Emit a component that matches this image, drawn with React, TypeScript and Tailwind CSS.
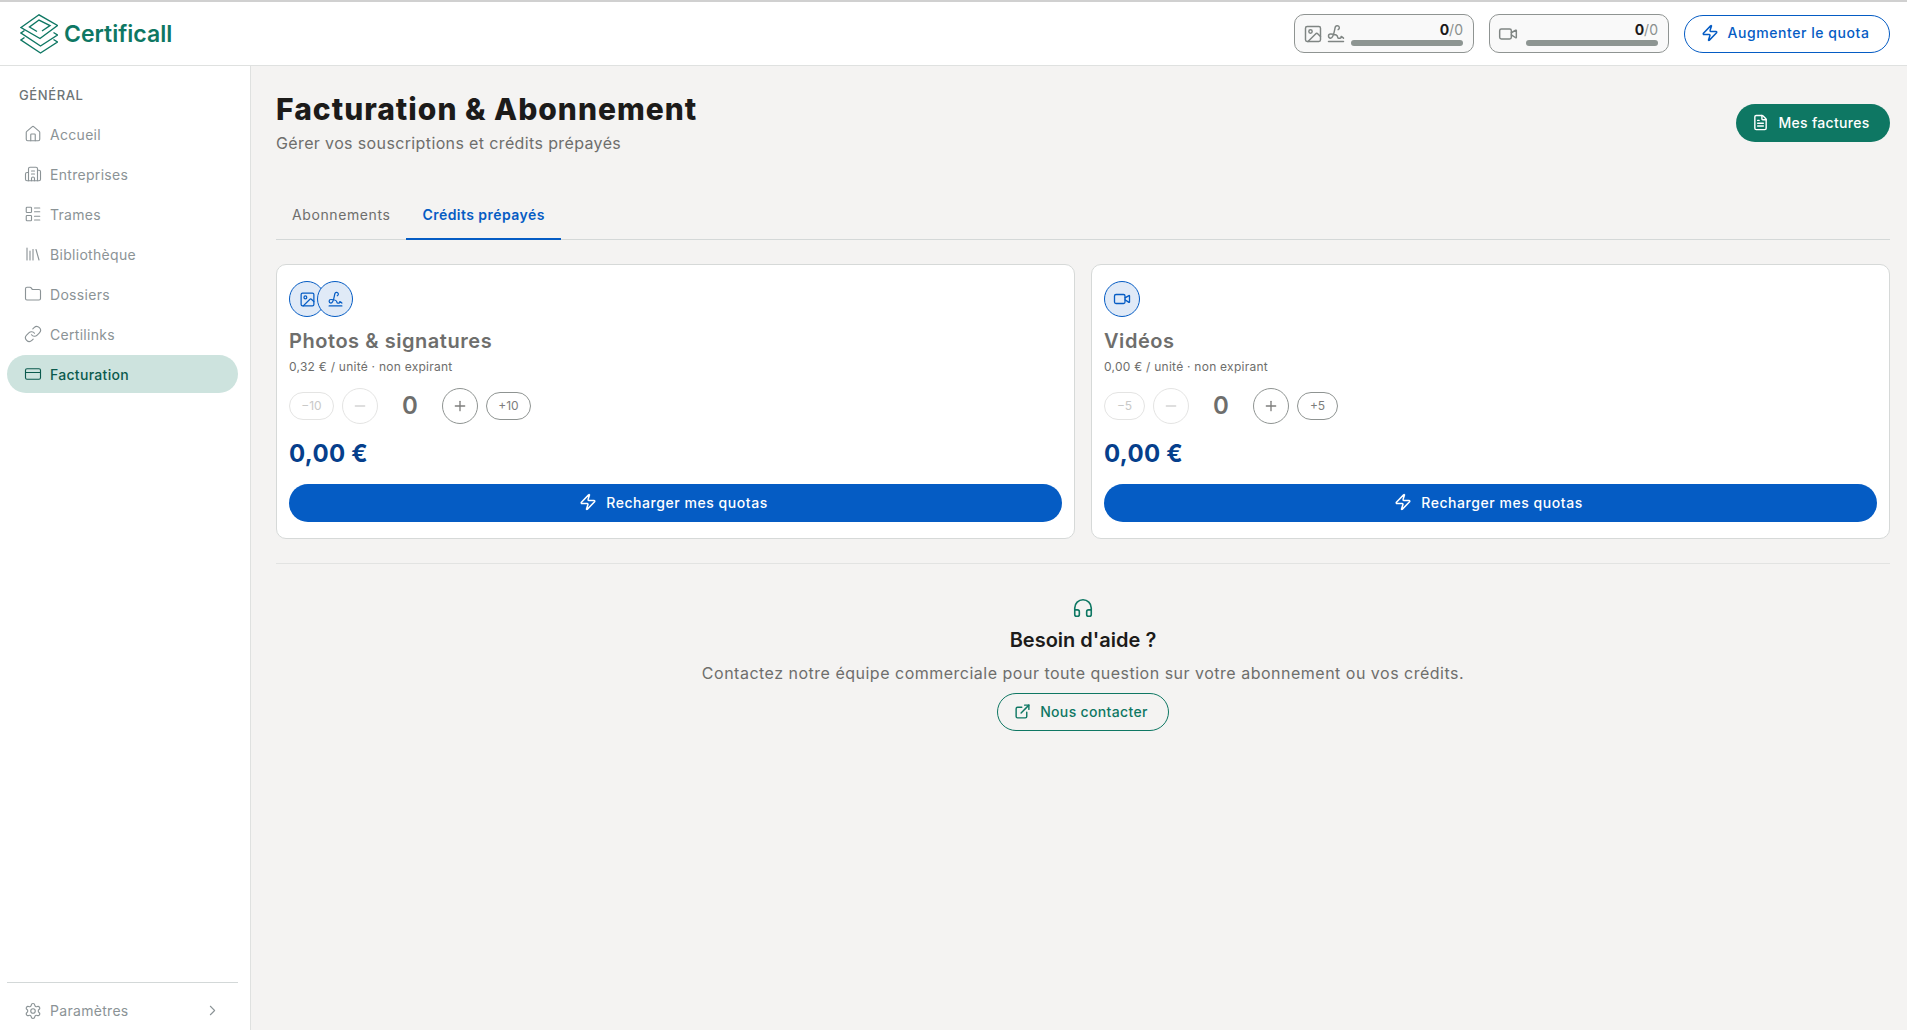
import type { ReactNode } from 'react';
import {
  Building2,
  ChevronRight,
  CreditCard,
  ExternalLink,
  FileText,
  Folder,
  Headphones,
  House,
  Image as ImageIcon,
  LayoutList,
  Library,
  Link as LinkIcon,
  Minus,
  Plus,
  Settings,
  Signature,
  Video,
  Zap,
} from 'lucide-react';

const NAV_ITEMS = [
  { label: 'Accueil', icon: House },
  { label: 'Entreprises', icon: Building2 },
  { label: 'Trames', icon: LayoutList },
  { label: 'Bibliothèque', icon: Library },
  { label: 'Dossiers', icon: Folder },
  { label: 'Certilinks', icon: LinkIcon },
  { label: 'Facturation', icon: CreditCard, active: true },
];

function Logo() {
  return (
    <svg width="38" height="40" viewBox="0 0 38 40" fill="none" stroke="#0e7763" strokeWidth="1.4">
      <path d="M1 13.5 19 .8 37.5 11.5 20 24.5Z" />
      <path d="M22 17 30 11.5 19 6 9.5 13 17 17.5" />
      <path d="M4.5 16.5 1 19 20.5 32 37.5 21 33.5 18.5" />
      <path d="M4.5 23.5 1 26 20.5 39 37.5 28 33.5 25.5" />
    </svg>
  );
}

function QuotaBox({ icons, barClass }: { icons: ReactNode; barClass: string }) {
  return (
    <div className="flex h-[39px] w-[180px] items-center rounded-[10px] border border-[#8f9492] bg-[#f9f9f9] pl-2 pr-[10px]">
      <div className="flex items-center gap-[3px] text-[#7f8583]">{icons}</div>
      <div className={`ml-auto flex flex-col items-end ${barClass}`}>
        <p className="text-[14px] leading-[16px]">
          <span className="font-bold text-[#1c1b1a]">0</span>
          <span className="text-[#8a908e]">/0</span>
        </p>
        <div className="mt-[2px] h-[6px] w-full rounded-full bg-[#8d9592]" />
      </div>
    </div>
  );
}

function StepPill({ label, width, disabled }: { label: string; width: string; disabled?: boolean }) {
  return (
    <button
      className={`flex h-[28px] items-center justify-center rounded-full border text-[12px] ${width} ${
        disabled ? 'border-[#e4e4e3] text-[#c9c9c8]' : 'border-[#8f9492] text-[#7d7d7c]'
      }`}
    >
      {label}
    </button>
  );
}

function StepCircle({ disabled, children }: { disabled?: boolean; children: ReactNode }) {
  return (
    <button
      className={`flex h-9 w-9 items-center justify-center rounded-full border ${
        disabled ? 'border-[#e4e4e3] text-[#d4d4d3]' : 'border-[#8f9492] text-[#7d7d7c]'
      }`}
    >
      {children}
    </button>
  );
}

function IconBubble({ children, overlap }: { children: ReactNode; overlap?: boolean }) {
  return (
    <div
      className={`flex h-9 w-9 items-center justify-center rounded-full border border-[#055cc4] bg-[#e0eaf7] text-[#055cc4] ${
        overlap ? '-ml-2' : ''
      }`}
    >
      {children}
    </div>
  );
}

function CreditCardBlock({
  icons,
  title,
  price,
  step,
  pillWidth,
}: {
  icons: ReactNode;
  title: string;
  price: string;
  step: number;
  pillWidth: string;
}) {
  return (
    <div className="rounded-[10px] border border-[#d6d9d8] bg-white px-3 pb-[16px] pt-4">
      <div className="flex">{icons}</div>
      <h2 className="mt-[10px] text-[20px] font-semibold leading-7 tracking-[0.55px] text-[#6e6e6c]">{title}</h2>
      <p className="mt-1 text-[12px] leading-4 tracking-[0.25px] text-[#6e6e6c]">{price} / unité · non expirant</p>
      <div className="mt-[13px] flex items-center">
        <StepPill label={`−${step}`} width={pillWidth} disabled />
        <div className="ml-2">
          <StepCircle disabled>
            <Minus size={16} />
          </StepCircle>
        </div>
        <span className="w-16 text-center text-[24px] font-semibold text-[#6e6e6c]">0</span>
        <StepCircle>
          <Plus size={16} />
        </StepCircle>
        <div className="ml-2">
          <StepPill label={`+${step}`} width={pillWidth} />
        </div>
      </div>
      <p className="mt-[14px] text-[24px] font-bold leading-8 tracking-[0.3px] text-[#063f8c]">0,00 €</p>
      <button className="mt-[14px] flex h-[38px] w-full items-center justify-center gap-[9px] rounded-full bg-[#055cc4] pb-[2px] pr-1 text-[14px] font-medium tracking-[0.55px] text-white">
        <Zap size={18} />
        Recharger mes quotas
      </button>
    </div>
  );
}

export default function App() {
  return (
    <div className="flex h-screen flex-col overflow-hidden bg-[#f4f3f2] font-[Inter,sans-serif] text-[#1c1b1a]">
      {/* Header */}
      <header className="flex h-[66px] shrink-0 items-center border-b border-t-2 border-b-[#dfe1e0] border-t-[#d0d0d0] bg-white pl-5 pr-[17px]">
        <Logo />
        <span className="ml-[6px] mt-[2px] text-[23px] font-semibold text-[#0e7763]">Certificall</span>
        <div className="ml-auto flex items-center gap-[15px]">
          <QuotaBox
            barClass="w-[112px]"
            icons={
              <>
                <ImageIcon size={20} strokeWidth={1.75} />
                <Signature size={20} strokeWidth={1.75} />
              </>
            }
          />
          <QuotaBox barClass="w-[132px]" icons={<Video size={20} strokeWidth={1.75} />} />
          <button className="flex h-[38px] w-[206px] items-center justify-center gap-[9px] rounded-full border border-[#055cc4] bg-white pb-[2px] pr-1 text-[14px] font-medium tracking-[0.55px] text-[#055cc4]">
            <Zap size={18} />
            Augmenter le quota
          </button>
        </div>
      </header>

      <div className="flex min-h-0 flex-1">
        {/* Sidebar */}
        <aside className="flex w-[251px] shrink-0 flex-col border-r border-[#dfe1e0] bg-white pl-[7px] pr-3">
          <p className="mt-[21px] pl-3 text-[13px] font-medium leading-4 tracking-[0.6px] text-[#6d7476]">GÉNÉRAL</p>
          <nav className="mt-3 flex flex-col gap-[2px]">
            {NAV_ITEMS.map((item) => {
              const Icon = item.icon;
              return (
                <div
                  key={item.label}
                  className={`flex h-[38px] items-center gap-2 rounded-full pl-[17px] text-[14px] tracking-[0.3px] ${
                    item.active
                      ? 'bg-[#cde3de] font-medium text-[#0b5a4d]'
                      : 'text-[#8b9396]'
                  }`}
                >
                  <Icon size={18} strokeWidth={1.5} />
                  {item.label}
                </div>
              );
            })}
          </nav>
          <div className="mt-auto flex h-[48px] items-center gap-2 border-t border-[#d3d8d8] pl-[17px] pr-[17px] pt-2 text-[14px] tracking-[0.3px] text-[#8b9396]">
            <Settings size={18} strokeWidth={1.5} />
            Paramètres
            <ChevronRight size={17} strokeWidth={1.5} className="ml-auto" />
          </div>
        </aside>

        {/* Main */}
        <main className="min-w-0 flex-1 pl-[25px] pr-[17px] pt-[25px]">
          <div className="flex items-center justify-between">
            <div>
              <h1 className="text-[30px] font-extrabold leading-9 tracking-[1px] text-[#1c1b1a]">Facturation &amp; Abonnement</h1>
              <p className="mt-1 text-[16px] leading-6 tracking-[0.37px] text-[#6e6e6c]">Gérer vos souscriptions et crédits prépayés</p>
            </div>
            <button className="flex h-[38px] w-[154px] items-center justify-center gap-[9px] rounded-full bg-[#0e7763] pb-[2px] pr-1 text-[14px] font-medium tracking-[0.3px] text-white">
              <FileText size={17} />
              Mes factures
            </button>
          </div>

          {/* Tabs */}
          <div className="mt-[41px] flex h-[44px] border-b border-[#d4d8d8]">
            <button className="h-[44px] px-4 pb-2 text-[14px] tracking-[0.6px] text-[#6e6e6c]">Abonnements</button>
            <button className="h-[44px] border-b-2 border-[#055cc4] px-4 pb-[6px] text-[14px] font-semibold tracking-[0.45px] text-[#055cc4]">Crédits prépayés</button>
          </div>

          {/* Credit cards */}
          <div className="mt-6 grid grid-cols-2 gap-4">
            <CreditCardBlock
              title="Photos & signatures"
              price="0,32 €"
              step={10}
              pillWidth="w-[45px]"
              icons={
                <>
                  <IconBubble>
                    <ImageIcon size={17} strokeWidth={1.75} />
                  </IconBubble>
                  <IconBubble overlap>
                    <Signature size={17} strokeWidth={1.75} />
                  </IconBubble>
                </>
              }
            />
            <CreditCardBlock
              title="Vidéos"
              price="0,00 €"
              step={5}
              pillWidth="w-[41px]"
              icons={
                <IconBubble>
                  <Video size={18} strokeWidth={1.75} />
                </IconBubble>
              }
            />
          </div>

          {/* Help */}
          <div className="mt-[24px] flex flex-col items-center border-t border-[#e2e3e2] pt-[33px]">
            <Headphones size={22} strokeWidth={1.75} className="text-[#0e7763]" />
            <h3 className="mt-[7px] text-[20px] font-semibold leading-7 text-[#1c1b1a]">Besoin d'aide ?</h3>
            <p className="mt-[7px] text-[16px] leading-6 tracking-[0.5px] text-[#6e6e6c]">
              Contactez notre équipe commerciale pour toute question sur votre abonnement ou vos crédits.
            </p>
            <button className="mt-2 flex h-[38px] w-[172px] items-center justify-center gap-[9px] rounded-full border border-[#0e7763] pb-[2px] pr-1 text-[14px] font-medium tracking-[0.35px] text-[#0e7763]">
              <ExternalLink size={17} />
              Nous contacter
            </button>
          </div>
        </main>
      </div>
    </div>
  );
}
